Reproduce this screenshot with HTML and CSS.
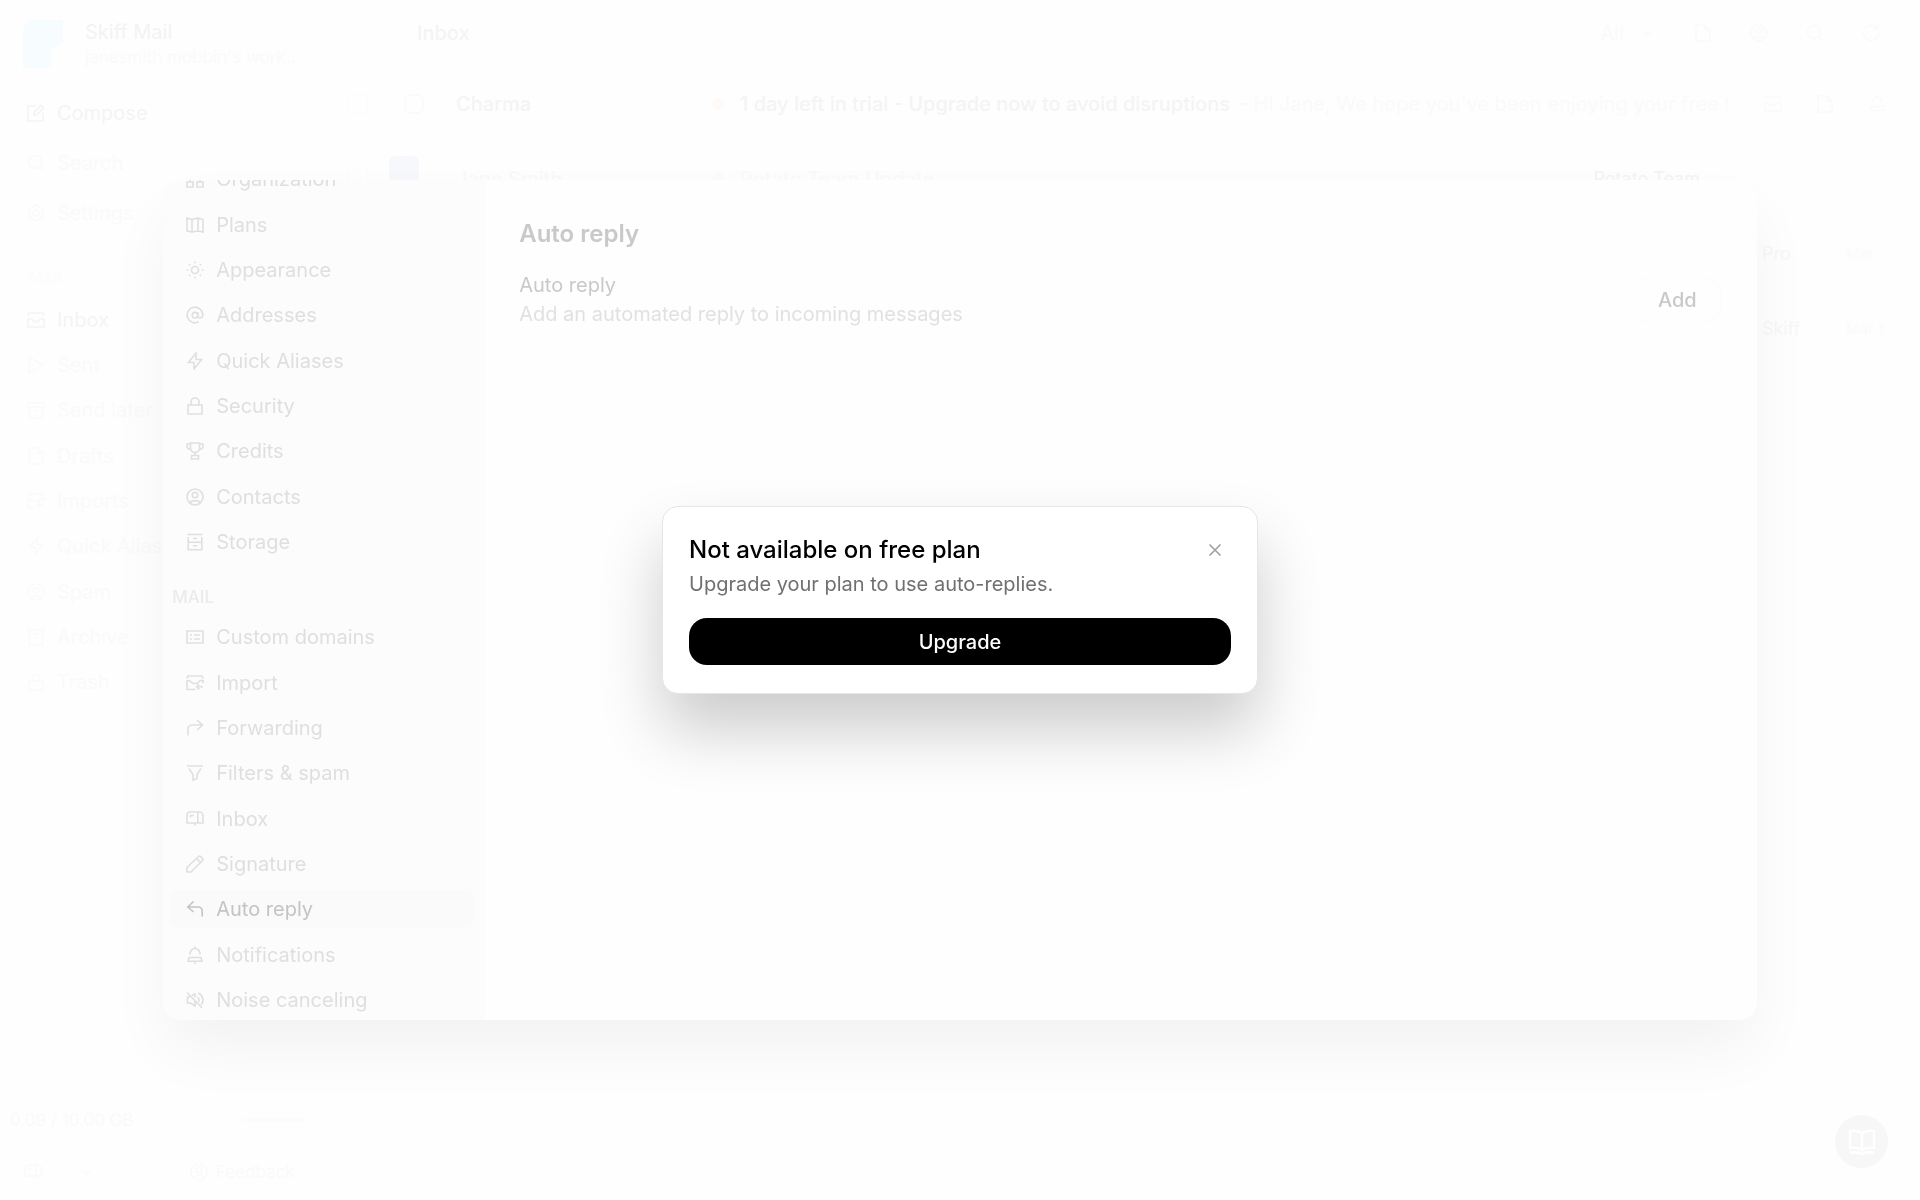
FILE: index.html
```html
<!DOCTYPE html>
<html lang="en">
<head>
    <meta charset="UTF-8">
    <meta name="viewport" content="width=device-width, initial-scale=1.0">
    <title>Skiff Mail</title>
    <link rel="stylesheet" href="styles.css">
</head>
<body>
    <!-- Icon sprite -->
    <svg class="sprite" aria-hidden="true">
        <symbol id="i-org" viewBox="0 0 18 18"><path d="M6 1h6v5H6zM9 6v3M4 12V9h10v3M1 12h6v5H1zM11 12h6v5h-6z"/></symbol>
        <symbol id="i-plans" viewBox="0 0 18 18"><path d="M1 2l5 1.500 6-1.500 5 1.500V16l-5-1-6 1-5-1zM6 3.500V16M12 2v13"/></symbol>
        <symbol id="i-sun" viewBox="0 0 18 18"><circle cx="9" cy="9" r="3.500"/><path d="M9 .5v1.800M9 15.700v1.800M.5 9h1.800M15.700 9h1.800M3 3l1.200 1.200M13.800 13.800L15 15M3 15l1.200-1.200M13.800 4.200L15 3"/></symbol>
        <symbol id="i-at" viewBox="0 0 18 18"><circle cx="9" cy="9.200" r="2.800"/><path d="M11.800 6v4.500c0 2 5 2 5-1.500a7.800 7.800 0 1 0-4 6.800"/></symbol>
        <symbol id="i-bolt" viewBox="0 0 18 18"><path d="M10 1L2.500 10.500H8V17l7.500-9.500H10z"/></symbol>
        <symbol id="i-lock" viewBox="0 0 18 18"><path d="M2 8h14v9H2zM5 8V5a4 4 0 0 1 8 0v3"/></symbol>
        <symbol id="i-cup" viewBox="0 0 18 18"><path d="M4.500 1h9v5a4.500 4.500 0 0 1-9 0zM4.500 2H1v2.500A3.500 3 0 0 0 4.800 7.500M13.500 2H17v2.500a3.500 3 0 0 1-3.800 3M9 10.500V13M5.500 13.500h7V17h-7z"/></symbol>
        <symbol id="i-user" viewBox="0 0 18 18"><circle cx="9" cy="9" r="8"/><circle cx="9" cy="7" r="2.800"/><path d="M4 14.500c1.500-2.500 8.500-2.500 10 0"/></symbol>
        <symbol id="i-storage" viewBox="0 0 18 18"><path d="M1.500 1.500h15M2.200 4v12.800h13.600V4M2.200 9.200h13.600M7 5.500h4M7 12.800h4"/></symbol>
        <symbol id="i-list" viewBox="0 0 18 18"><path d="M1 3h16v12H1zM4 7h2M4 11h2M8 7h6M8 11h6"/></symbol>
        <symbol id="i-import" viewBox="0 0 18 18"><path d="M1 4.500l1-2.500h14l1 2.500M9.500 15.500H1V7l2.500-.5L7 9.500h4l3-3H17V9M17 12.800h-6M13.200 10.200L10.600 12.800l2.600 2.800"/></symbol>
        <symbol id="i-forward" viewBox="0 0 18 18"><path d="M2 16.500V10a4 4 0 0 1 4-4h10.500M11 1l5.500 5L11 11"/></symbol>
        <symbol id="i-filter" viewBox="0 0 18 18"><path d="M1 2h16M3 4.500l4 6V16l4-1.500v-4l4-6"/></symbol>
        <symbol id="i-mailbox" viewBox="0 0 18 18"><path d="M4 2h9.500A3.500 3.500 0 0 1 17 5.500V13H1V5a3 3 0 0 1 3-3zM11.800 2.500V13M4.500 7.500v-2H8M9 13v2.500"/></symbol>
        <symbol id="i-pencil" viewBox="0 0 18 18"><path d="M1 17v-4.500L12.500 1.500q1-1 2.300.2l1.500 1.500q1.200 1.200.2 2.300L5 17zM11 4l3.500 3.500"/></symbol>
        <symbol id="i-reply" viewBox="0 0 18 18"><path d="M16.200 16.500V11a4 4 0 0 0-4-4H1.800M7.500 1.500L1.800 7l5.700 5"/></symbol>
        <symbol id="i-bell" viewBox="0 0 18 18"><path d="M4 8.500V8a5 5.500 0 0 1 10 0v.5M9 .5v2M3 11.500h12l1 3.800H2zM8 17.200h2"/></symbol>
        <symbol id="i-mute" viewBox="0 0 18 18"><path d="M1 1.500L16 17M4 6H1.500v6H4.500L9 15V10M6 4.500L9 3v3.500M11.500 6a4 4 0 0 1 1 5M12 2a7.500 7.500 0 0 1 3 12"/></symbol>
        <symbol id="i-compose" viewBox="0 0 18 18"><path d="M9 2H1v15h15V9M7 11l.5-3L14 1.500 16.500 4 10 10.500z"/></symbol>
        <symbol id="i-search" viewBox="0 0 18 18"><circle cx="8" cy="8" r="6.500"/><path d="M12.800 12.800L17 17"/></symbol>
        <symbol id="i-gear" viewBox="0 0 18 18"><path d="M9 1l7 4v8l-7 4-7-4V5z"/><circle cx="9" cy="9" r="3"/></symbol>
        <symbol id="i-inbox" viewBox="0 0 18 18"><path d="M1 5l1-3h14l1 3M1 8h4l2 2.500h4L13 8h4v8H1z"/></symbol>
        <symbol id="i-sent" viewBox="0 0 18 18"><path d="M2 1.500L16 9 2 16.500zM2 9h5"/></symbol>
        <symbol id="i-file" viewBox="0 0 18 18"><path d="M2 1h9l5 5v11H2zM11 1v5h5"/></symbol>
        <symbol id="i-box" viewBox="0 0 18 18"><path d="M1 2h16v4H1zM2.500 6v11h13V6M7 9.500h4"/></symbol>
        <symbol id="i-close" viewBox="0 0 18 18"><path d="M3.500 3.500l11 11M14.500 3.500l-11 11"/></symbol>
        <symbol id="i-down" viewBox="0 0 18 18"><path d="M5 7l4 4 4-4"/></symbol>
        <symbol id="i-refresh" viewBox="0 0 18 18"><path d="M15 4.500A7.500 7.500 0 1 0 16.500 9M15.500 1v4h-4"/></symbol>
        <symbol id="i-book" viewBox="0 0 28 28"><path d="M14 5.500C10.500 2.500 6 2.500 2 3v17c4-.5 8.500-.5 12 2 3.500-2.500 8-2.500 12-2V3c-4-.5-8.500-.5-12 2.500zM14 5.500V22M2 24.500c4-.5 8.500-.5 12 1.500 3.500-2 8-2 12-1.500"/></symbol>
    </svg>

    <!-- Mail app -->
    <div class="app">
        <aside class="sidebar">
            <div class="account">
                <svg class="logo" viewBox="0 0 45 48"><path d="M8 0h34v22l-12 8v12q0 6-6 6H2V12q0-6 6-12z"/></svg>
                <div>
                    <div class="account-name">Skiff Mail</div>
                    <div class="account-space">janesmith mobbin's work..</div>
                </div>
            </div>
            <nav class="side-nav">
                <a href="#" class="compose"><svg class="icon"><use href="#i-compose"/></svg>Compose</a>
                <a href="#"><svg class="icon"><use href="#i-search"/></svg>Search</a>
                <a href="#"><svg class="icon"><use href="#i-gear"/></svg>Settings</a>
            </nav>
            <div class="side-label">Mail</div>
            <nav class="side-folders">
                <a href="#" class="current"><svg class="icon"><use href="#i-inbox"/></svg>Inbox</a>
                <a href="#"><svg class="icon"><use href="#i-sent"/></svg>Sent</a>
                <a href="#"><svg class="icon"><use href="#i-box"/></svg>Send later</a>
                <a href="#"><svg class="icon"><use href="#i-file"/></svg>Drafts</a>
                <a href="#"><svg class="icon"><use href="#i-import"/></svg>Imports</a>
                <a href="#"><svg class="icon"><use href="#i-bolt"/></svg>Quick Aliases</a>
                <a href="#"><svg class="icon"><use href="#i-user"/></svg>Spam</a>
                <a href="#"><svg class="icon"><use href="#i-box"/></svg>Archive</a>
                <a href="#"><svg class="icon"><use href="#i-lock"/></svg>Trash</a>
            </nav>
            <div class="side-bottom">
                <div class="storage"><span>0.09 / 10.00 GB</span><span class="storage-bar"></span></div>
                <div class="side-tools">
                    <svg class="icon"><use href="#i-mailbox"/></svg>
                    <svg class="icon"><use href="#i-down"/></svg>
                    <a href="#"><svg class="icon"><use href="#i-user"/></svg>Feedback</a>
                </div>
            </div>
        </aside>

        <main class="mail">
            <header class="mail-header">
                <span class="mail-title">Inbox</span>
                <div class="mail-tools">
                    <span>All</span>
                    <svg class="icon"><use href="#i-down"/></svg>
                    <svg class="icon"><use href="#i-file"/></svg>
                    <svg class="icon"><use href="#i-user"/></svg>
                    <svg class="icon"><use href="#i-search"/></svg>
                    <svg class="icon"><use href="#i-refresh"/></svg>
                </div>
            </header>
            <div class="mail-row">
                <input type="checkbox" aria-label="Select Charma">
                <span class="avatar"></span>
                <span class="sender">Charma</span>
                <span class="dot"></span>
                <span class="subject">1 day left in trial - Upgrade now to avoid disruptions</span>
                <span class="preview">– Hi Jane, We hope you've been enjoying your free t</span>
                <div class="row-tools">
                    <svg class="icon"><use href="#i-inbox"/></svg>
                    <svg class="icon"><use href="#i-file"/></svg>
                    <svg class="icon"><use href="#i-bell"/></svg>
                </div>
            </div>
            <div class="mail-row faint">
                <input type="checkbox" aria-label="Select Potato Team">
                <span class="avatar blue"></span>
                <span class="sender">Jane Smith</span>
                <span class="dot"></span>
                <span class="subject">Potato Team Update</span>
                <span class="tag">Potato Team</span>
            </div>
            <div class="mail-row faint end"><span class="tag">Pro</span><time>Mar</time></div>
            <div class="mail-row faint end"><span class="tag">Skiff</span><time>Mar 1</time></div>
        </main>
        <button class="help" aria-label="Help"><svg><use href="#i-book"/></svg></button>
    </div>

    <!-- Settings -->
    <div class="overlay">
        <div class="settings">
            <nav class="settings-nav">
                <div class="nav-group">
                    <a href="#"><svg class="icon"><use href="#i-org"/></svg>Organization</a>
                    <a href="#"><svg class="icon"><use href="#i-plans"/></svg>Plans</a>
                    <a href="#"><svg class="icon"><use href="#i-sun"/></svg>Appearance</a>
                    <a href="#"><svg class="icon"><use href="#i-at"/></svg>Addresses</a>
                    <a href="#"><svg class="icon"><use href="#i-bolt"/></svg>Quick Aliases</a>
                    <a href="#"><svg class="icon"><use href="#i-lock"/></svg>Security</a>
                    <a href="#"><svg class="icon"><use href="#i-cup"/></svg>Credits</a>
                    <a href="#"><svg class="icon"><use href="#i-user"/></svg>Contacts</a>
                    <a href="#"><svg class="icon"><use href="#i-storage"/></svg>Storage</a>
                </div>
                <h3>MAIL</h3>
                <div class="nav-group">
                    <a href="#"><svg class="icon"><use href="#i-list"/></svg>Custom domains</a>
                    <a href="#"><svg class="icon"><use href="#i-import"/></svg>Import</a>
                    <a href="#"><svg class="icon"><use href="#i-forward"/></svg>Forwarding</a>
                    <a href="#"><svg class="icon"><use href="#i-filter"/></svg>Filters &amp; spam</a>
                    <a href="#"><svg class="icon"><use href="#i-mailbox"/></svg>Inbox</a>
                    <a href="#"><svg class="icon"><use href="#i-pencil"/></svg>Signature</a>
                    <a href="#" class="active"><svg class="icon"><use href="#i-reply"/></svg>Auto reply</a>
                    <a href="#"><svg class="icon"><use href="#i-bell"/></svg>Notifications</a>
                    <a href="#"><svg class="icon"><use href="#i-mute"/></svg>Noise canceling</a>
                </div>
            </nav>
            <section class="settings-content">
                <h2>Auto reply</h2>
                <div class="setting">
                    <div>
                        <div class="setting-name">Auto reply</div>
                        <div class="setting-text">Add an automated reply to incoming messages</div>
                    </div>
                    <button class="add-btn">Add</button>
                </div>
            </section>
        </div>
    </div>

    <!-- Upgrade dialog -->
    <div class="overlay">
        <div class="dialog" role="dialog" aria-labelledby="dialogTitle">
            <div class="dialog-head">
                <h1 id="dialogTitle">Not available on free plan</h1>
                <button class="close-btn" aria-label="Close"><svg class="icon"><use href="#i-close"/></svg></button>
            </div>
            <p>Upgrade your plan to use auto-replies.</p>
            <button class="upgrade-btn">Upgrade</button>
        </div>
    </div>
</body>
</html>
```
FILE: styles.css
```css
* {
    box-sizing: border-box;
}
body {
    margin: 0;
    font-family: Inter, "Liberation Sans", sans-serif;
    font-size: 20px;
    line-height: 28px;
    color: #f5f5f5;
    background-color: #fefefe;
}
a {
    color: inherit;
    text-decoration: none;
}
button {
    font: inherit;
    border: none;
    padding: 0;
    cursor: pointer;
}
h1, h2, h3, p {
    margin: 0;
}
.sprite {
    display: none;
}
.icon {
    width: 18px;
    height: 18px;
    flex: none;
}
svg {
    fill: none;
    stroke: currentColor;
    stroke-width: 1.6;
}

/* Mail app */
.app {
    display: flex;
    height: 100vh;
    overflow: hidden;
}
.sidebar {
    display: flex;
    flex-direction: column;
    width: 324px;
    flex: none;
}
.account {
    display: flex;
    align-items: center;
    gap: 19px;
    padding: 19px 21px 0;
}
.logo {
    width: 45px;
    height: 48px;
    fill: #f7fcfe;
    stroke: none;
}
.account-name {
    line-height: 27px;
    color: #f3f3f3;
}
.account-space {
    font-size: 17px;
    line-height: 22px;
    white-space: nowrap;
    color: #fafafa;
}
.side-nav a, .side-folders a {
    display: flex;
    align-items: center;
    gap: 12px;
    padding-left: 27px;
    color: #fafafa;
}
.side-nav a {
    height: 50px;
}
.side-nav {
    padding-top: 20px;
}
.side-nav .compose, .side-folders .current {
    color: #f4f4f4;
}
.side-label {
    padding: 25px 0 6px 28px;
    font-size: 17px;
    color: #fcfcfc;
}
.side-folders {
    display: grid;
    height: 408px;
}
.side-bottom {
    margin-top: auto;
    padding-bottom: 14px;
    color: #fafafa;
}
.storage {
    display: flex;
    align-items: center;
    justify-content: space-between;
    padding: 0 20px 0 10px;
    font-size: 17px;
}
.storage-bar {
    width: 62px;
    height: 4px;
    background-color: #fcfcfc;
}
.side-tools {
    display: flex;
    align-items: center;
    gap: 36px;
    padding: 24px 0 0 24px;
    font-size: 17px;
}
.side-tools a {
    display: flex;
    align-items: center;
    gap: 8px;
    margin-left: 58px;
}
.mail {
    flex: 1;
    min-width: 0;
    padding: 0 34px 0 24px;
}
.mail-header {
    display: flex;
    align-items: center;
    justify-content: space-between;
    height: 66px;
    padding: 0 6px 0 69px;
}
.mail-title {
    font-weight: 500;
    color: #f4f4f4;
}
.mail-tools {
    display: flex;
    align-items: center;
    gap: 38px;
    color: #fafafa;
}
.mail-tools span {
    margin-right: -24px;
}
.mail-row {
    display: flex;
    align-items: center;
    height: 75px;
    color: #f4f4f4;
}
.mail-row input {
    appearance: none;
    width: 20px;
    height: 20px;
    margin: 0 36px 0 0;
    border: 1px solid #fbfbfb;
    border-radius: 4px;
}
.avatar {
    width: 20px;
    height: 20px;
    margin-right: 32px;
    border-radius: 6px;
    border: 2px solid #f9fbfb;
}
.blue {
    width: 30px;
    height: 46px;
    margin: 0 37px 0 -15px;
    border: none;
    background-color: #f6f8fb;
}
.sender {
    width: 256px;
    font-weight: 500;
}
.dot {
    width: 12px;
    height: 12px;
    margin-right: 16px;
    border-radius: 6px;
    background-color: #fdfaf8;
}
.subject {
    font-weight: 500;
    white-space: nowrap;
}
.preview {
    flex: 1;
    min-width: 0;
    margin: 0 36px 0 8px;
    overflow: hidden;
    white-space: nowrap;
    color: #fafafa;
}
.row-tools {
    display: flex;
    gap: 34px;
    color: #fafafa;
}
.faint {
    color: #f9f9f9;
}
.faint .subject {
    flex: 1;
    color: #fafafa;
}
.faint .tag {
    margin-right: 186px;
    font-size: 18px;
    color: #f3f3f3;
}
.end {
    justify-content: flex-end;
}
.end .tag {
    width: 84px;
    margin: 0;
    color: #f7f7f7;
}
.end time {
    width: 40px;
    font-size: 15px;
    white-space: nowrap;
    color: #fbfbfb;
}
.help {
    position: fixed;
    right: 32px;
    bottom: 32px;
    width: 53px;
    height: 53px;
    border-radius: 50%;
    color: #fff;
    background-color: #f7f7f7;
}
.help svg {
    display: block;
    width: 28px;
    height: 28px;
    margin: 0 auto;
    stroke-width: 2.4;
}

/* Settings */
.overlay {
    position: fixed;
    inset: 0;
    display: flex;
    align-items: center;
    justify-content: center;
}
.settings {
    display: flex;
    width: 83%;
    height: 70%;
    overflow: hidden;
    border-radius: 18px;
    background-color: #fefefe;
    box-shadow: 0 32px 64px -4px rgba(0, 0, 0, 0.05);
}
.settings-nav {
    display: flex;
    flex-direction: column;
    justify-content: flex-end;
    width: 322px;
    flex: none;
    padding: 0 12px 1px 6px;
    background-color: #fcfcfc;
}
.nav-group {
    display: grid;
    align-items: end;
    height: 408px;
    flex: none;
}
.nav-group a {
    display: flex;
    align-items: center;
    gap: 12px;
    height: 38px;
    padding-left: 17px;
    border-radius: 8px;
    color: #dfdfdf;
}
.nav-group .active {
    color: #c4c4c4;
    background-color: #fafafa;
}
.settings-nav h3 {
    padding: 22px 0 0 3px;
    font-size: 17px;
    font-weight: 500;
    color: #ebebeb;
}
.settings-content {
    flex: 1;
    padding: 36px 36px 0 34px;
}
.settings-content h2 {
    font-size: 24px;
    line-height: 36px;
    font-weight: 600;
    color: #c9c9c9;
}
.setting {
    display: flex;
    align-items: center;
    justify-content: space-between;
    padding-top: 19px;
}
.setting-name {
    color: #c9c9c9;
}
.setting-text {
    line-height: 30px;
    color: #e1e1e1;
}
.add-btn {
    width: 87px;
    height: 44px;
    border: 1px solid #fcfcfc;
    border-radius: 14px;
    font-weight: 500;
    color: #c9c9c9;
    background-color: transparent;
}

/* Upgrade dialog */
.dialog {
    width: 596px;
    padding: 25px 26px 28px;
    border: 1px solid #e6e6e6;
    border-radius: 16px;
    background-color: #fff;
    box-shadow: 0 36px 64px rgba(0, 0, 0, 0.2);
}
.dialog-head {
    display: flex;
    align-items: center;
    justify-content: space-between;
}
.dialog h1 {
    font-size: 24px;
    line-height: 36px;
    font-weight: 500;
    color: #000;
}
.close-btn {
    width: 32px;
    height: 32px;
    color: #a0a0a0;
    background-color: transparent;
}
.close-btn .icon {
    display: block;
    margin: 0 auto;
}
.dialog p {
    line-height: 32px;
    color: #707070;
}
.upgrade-btn {
    width: 100%;
    height: 47px;
    margin-top: 18px;
    border-radius: 18px;
    font-weight: 500;
    color: #fff;
    background-color: #000;
}
```
